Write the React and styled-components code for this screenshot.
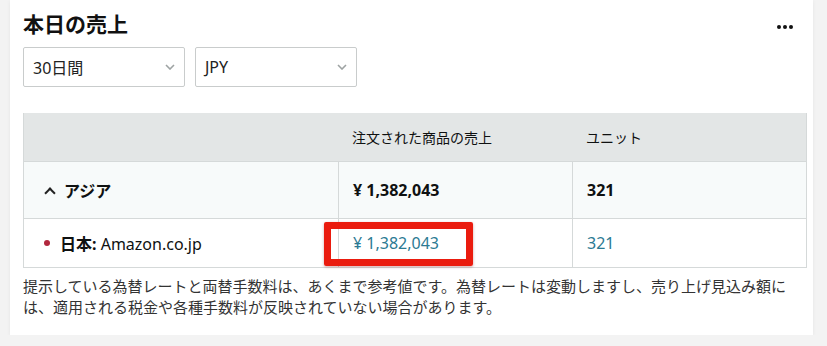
import React from "react"
import styled, { createGlobalStyle } from "styled-components"

const GlobalStyle = createGlobalStyle`
  html, body {
    margin: 0;
    padding: 0;
    background: #f3f3f3;
  }
  body {
    font-family: "Noto Sans", "Noto Sans CJK JP", sans-serif;
    color: #0f1111;
  }
`

const Card = styled.div`
  margin: 0 14px 0 10px;
  padding: 8px 8px 18px 13px;
  background: #ffffff;
  box-shadow: 0 1px 4px rgba(0, 0, 0, 0.06);
`

const TitleRow = styled.div`
  display: flex;
  align-items: center;
  justify-content: space-between;
  height: 30px;
`

const Title = styled.h2`
  margin: 0;
  font-size: 21px;
  font-weight: 700;
  font-family: "Noto Sans CJK JP", sans-serif;
  line-height: 30px;
  color: #111;
`

const MoreDots = styled.div`
  display: flex;
  gap: 2px;
  margin-top: 8px;
  margin-right: 12px;

  span {
    width: 4px;
    height: 4px;
    border-radius: 50%;
    background: #111;
  }
`

const Filters = styled.div`
  display: flex;
  gap: 10px;
  margin-top: 9px;
`

const Select = styled.div`
  width: 162px;
  height: 40px;
  box-sizing: border-box;
  border: 1px solid #c9cccc;
  border-radius: 2px;
  display: flex;
  align-items: center;
  justify-content: space-between;
  padding: 0 9px 0 9px;
  font-size: 16px;
  font-family: "Noto Sans", "Noto Sans CJK JP", sans-serif;
  color: #222;
  background: #fff;
`

const Table = styled.div`
  margin-top: 26px;
  display: grid;
  grid-template-columns: 314px 234px 234px;
  border: 1px solid #d5d9d9;
  border-top: none;
  width: max-content;
`

const Cell = styled.div`
  position: relative;
  display: flex;
  align-items: center;
  gap: 6px;
  padding: 0 14px;
  height: ${p => p.$h}px;
  background: ${p => p.$bg || "#fff"};
  border-left: ${p => (p.$first || p.$head ? "none" : "1px solid #d5d9d9")};
  border-top: ${p => (p.$head ? "none" : "1px solid #d5d9d9")};
  font-size: ${p => (p.$head ? 14 : 16)}px;
  font-weight: ${p => (p.$bold ? 700 : 400)};
  color: ${p => p.$color || "#0f1111"};
  font-family: "Noto Sans", "Noto Sans CJK JP", sans-serif;
`

const Chevron = styled.span`
  width: 6px;
  height: 6px;
  border-left: 2px solid #222;
  border-top: 2px solid #222;
  transform: rotate(45deg);
  margin: 5px 4px 0 8px;
`

const Dot = styled.span`
  width: 6px;
  height: 6px;
  border-radius: 50%;
  background: #b1273d;
  margin: 0 4px 0 6px;
`

const Highlight = styled.div`
  position: absolute;
  left: -15px;
  top: 3px;
  width: 149px;
  height: 44px;
  box-sizing: border-box;
  border: 7px solid #ea1b0e;
  border-radius: 2px;
  box-shadow: 0 1px 3px rgba(120, 0, 0, 0.35);
  pointer-events: none;
`

const Note = styled.p`
  margin: 7px 0 0;
  width: 782px;
  font-size: 15px;
  line-height: 21px;
  color: #333;
  font-family: "Noto Sans CJK JP", sans-serif;
`

const Caret = () => (
  <svg width="10" height="6" viewBox="0 0 10 6">
    <path d="M1 1l4 4 4-4" fill="none" stroke="#9ea3a3" strokeWidth="1.6" />
  </svg>
)

export default function App() {
  return (
    <>
      <GlobalStyle />
      <Card>
        <TitleRow>
          <Title>本日の売上</Title>
          <MoreDots>
            <span />
            <span />
            <span />
          </MoreDots>
        </TitleRow>
        <Filters>
          <Select>
            30日間
            <Caret />
          </Select>
          <Select>
            JPY
            <Caret />
          </Select>
        </Filters>
        <Table>
          <Cell $head $first $h={48} $bg="#e3e6e6" />
          <Cell $head $h={48} $bg="#e3e6e6">注文された商品の売上</Cell>
          <Cell $head $h={48} $bg="#e3e6e6">ユニット</Cell>

          <Cell $first $bold $h={56} $bg="#f7fafa">
            <Chevron />
            アジア
          </Cell>
          <Cell $bold $h={56} $bg="#f7fafa">¥ 1,382,043</Cell>
          <Cell $bold $h={56} $bg="#f7fafa">321</Cell>

          <Cell $first $h={48}>
            <Dot />
            <span>
              <b>日本:</b> Amazon.co.jp
            </span>
          </Cell>
          <Cell $h={48} $color="#2b7a93">
            ¥ 1,382,043
            <Highlight />
          </Cell>
          <Cell $h={48} $color="#2b7a93">321</Cell>
        </Table>
        <Note>
          提示している為替レートと両替手数料は、あくまで参考値です。為替レートは変動しますし、売り上げ見込み額には、適用される税金や各種手数料が反映されていない場合があります。
        </Note>
      </Card>
    </>
  )
}
